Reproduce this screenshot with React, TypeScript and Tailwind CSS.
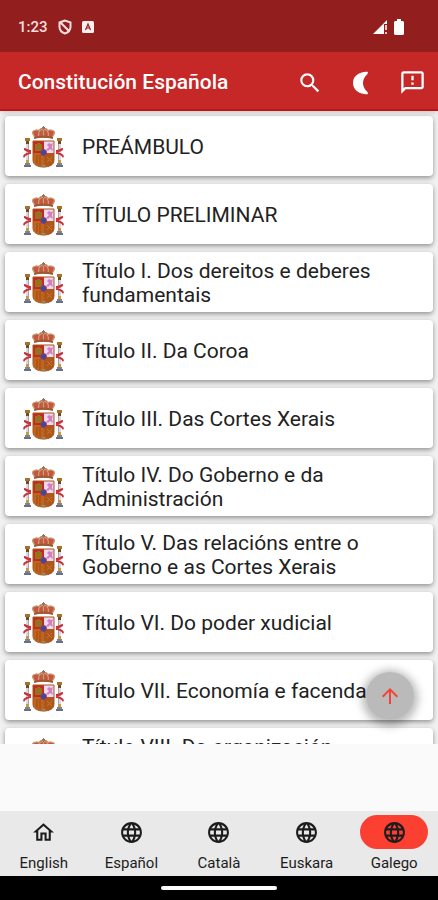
import { MdArrowUpward, MdLanguage, MdOutlineFeedback, MdOutlineHome, MdSearch } from "react-icons/md";

const titles = [
  "PREÁMBULO",
  "TÍTULO PRELIMINAR",
  "Título I. Dos dereitos e deberes fundamentais",
  "Título II. Da Coroa",
  "Título III. Das Cortes Xerais",
  "Título IV. Do Goberno e da Administración",
  "Título V. Das relacións entre o Goberno e as Cortes Xerais",
  "Título VI. Do poder xudicial",
  "Título VII. Economía e facenda",
  "Título VIII. Da organización territorial do Estado",
];

const languages = [
  { label: "English", icon: MdOutlineHome },
  { label: "Español", icon: MdLanguage },
  { label: "Català", icon: MdLanguage },
  { label: "Euskara", icon: MdLanguage },
  { label: "Galego", icon: MdLanguage, active: true },
];

function Pillar() {
  return (
    <>
      <path d="M2 12h5v3H2z" fill="#a87328" />
      <path d="M3 15h3v3H3z" fill="#6b4c2c" />
      <path d="M3 18h3v17H3z" fill="#dcd9dc" />
      <path d="M5 18h1v17H5z" fill="#a9a4ac" />
      <path d="M3 34h3v3H3z" fill="#c79b3c" />
      <path d="M2 37h5v2H2z" fill="#7c8398" />
      <path d="M1 39h7v2H1z" fill="#6a7186" />
      <path d="M1 22c2 0 4 2 7 2v2c-3 1-5-1-7-2z" fill="#c8323a" />
      <path d="M0 30c2-3 5-4 8-4v2c-3 0-5 1-7 4z" fill="#c8323a" />
    </>
  );
}

function CoatOfArms() {
  return (
    <svg viewBox="0 0 42 42" className="h-[42px] w-[42px] shrink-0" aria-hidden="true">
      <Pillar />
      <g transform="translate(41 0) scale(-1 1)">
        <Pillar />
      </g>
      {/* crown */}
      <path d="M12 12 9 7c0-3 4-4 7-3 1-2 3-2 4.500-2s3.500 0 4.500 2c3-1 7 0 7 3l-3 5z" fill="#c9553f" />
      <path
        d="M12 12 9.500 7c0-3 4-3.500 7-2.500M29 12l2.500-5c0-3-4-3.500-7-2.500M16.500 12c-2-4-1-8 4-9 5 1 6 5 4 9M20.500 2v10"
        fill="none"
        stroke="#c2a57c"
        strokeWidth="1.200"
      />
      <path d="M20.500 0v4M19 1.500h3" stroke="#8a7a58" strokeWidth="1" />
      <path d="M11 11q9.500-3 19 0v2q-9.500-3-19 0z" fill="#9b5b32" />
      {/* shield */}
      <path d="M10 15h11v12H10z" fill="#c6281f" />
      <path d="M21 15h10v12H21z" fill="#efd9ee" />
      <path d="M10 27h11v14c-6 0-11-2-11-7z" fill="#bd651c" />
      <path d="M21 27h10v7c0 5-4 7-10 7z" fill="#b0561c" />
      <path d="M12 18h2v-1h3v1h2v7h-7z" fill="#94701f" />
      <path d="m23 24 3-3-2-2 2-2 2 1 2-1-1 4 1 4-3-2-2 2z" fill="#d37fc0" />
      <path d="M14 29v9M17 29v11" stroke="#a34718" strokeWidth="1" />
      <path d="m24 31 5 5M29 31l-5 5" stroke="#c07a2a" strokeWidth="1" />
      <path d="M10 15h21v19c0 5-5 7-10.500 7S10 39 10 34z" fill="none" stroke="#a8551f" strokeWidth="1" />
      <circle cx="20.500" cy="26.500" r="3" fill="#3d4a9c" stroke="#a03a5a" strokeWidth="1" />
      <path d="M18 39h5l-2 3z" fill="#8d8d64" />
    </svg>
  );
}

function StatusBar() {
  return (
    <div className="flex h-13 shrink-0 items-center bg-[#931e1e] px-[18px] pt-0.5 text-white">
      <span className="text-[15px] font-medium text-[#f5dede]">1:23</span>
      <svg viewBox="0 0 14 16" className="ml-2.5 h-4 w-3.5" fill="none" stroke="#f5dede" strokeWidth="2">
        <path d="M7 1.500 1.500 3.500v4.500c0 3 2.500 5.500 5.500 6.500 3-1 5.500-3.500 5.500-6.500V3.500zM3 4l8 8" />
      </svg>
      <svg viewBox="0 0 12 12" className="ml-2.5 h-3 w-3">
        <rect width="12" height="12" rx="1.500" fill="#fbeeee" />
        <path d="M3.500 9 6 3l2.500 6M4.500 7h3" fill="none" stroke="#931e1e" strokeWidth="1.200" />
      </svg>
      <svg viewBox="0 0 15 15" className="ml-auto h-[15px] w-[15px]">
        <path d="M0 14 14 0v4h-3v10z" fill="#fff" />
        <path d="M13 5v5M13 12v2" stroke="#fff" strokeWidth="1.500" />
      </svg>
      <svg viewBox="0 0 10 16" className="mr-4 ml-1.5 h-4 w-2.5" fill="#fff">
        <path d="M3 0h4v2h2l1 1v12l-1 1H1l-1-1V3l1-1h2z" />
      </svg>
    </div>
  );
}

export default function App() {
  return (
    <div className="flex h-screen flex-col bg-[#fafafa] font-[Roboto,sans-serif]">
      <StatusBar />
      <header className="z-10 flex h-[59px] shrink-0 items-center border-b-2 border-[#c01414] bg-[#c62828] pt-1 pr-3 pl-[18px] text-white shadow-md">
        <h1 className="flex-1 text-[21px] font-medium">Constitución Española</h1>
        <div className="flex items-center gap-[26px]">
          <button aria-label="Buscar">
            <MdSearch className="h-[26px] w-[26px]" />
          </button>
          <button aria-label="Modo escuro">
            <svg viewBox="0 0 24 24" className="h-6 w-6" fill="currentColor">
              <path d="M19 1C14 0 4 3 4 12s10 12 15 11l-.5-2c-6-5-6-13 0-18z" />
            </svg>
          </button>
          <button aria-label="Comentarios">
            <MdOutlineFeedback className="h-[27px] w-[27px]" />
          </button>
        </div>
      </header>

      <div className="relative min-h-0 flex-1">
        <main className="h-full overflow-hidden bg-[#f1f1f1] px-[5px] pt-[5px]">
          <ul className="flex flex-col gap-2">
            {titles.map((title) => (
              <li key={title}>
                <button className="flex h-15 w-full items-center gap-[17px] rounded-sm bg-white pt-0.5 pr-10 pl-[18px] text-left shadow-[0_2px_5px_rgba(0,0,0,0.4)]">
                  <CoatOfArms />
                  <span className="text-[21px] leading-6 text-[#222]">{title}</span>
                </button>
              </li>
            ))}
          </ul>
        </main>
        <button
          aria-label="Subir"
          className="absolute right-6 bottom-6 flex h-12 w-12 items-center justify-center rounded-full bg-black/27 text-[#f44336] shadow-[0_2px_8px_4px_rgba(0,0,0,0.27)]"
        >
          <MdArrowUpward className="h-6 w-6" />
        </button>
      </div>

      <nav className="mt-[67px] flex h-[65px] shrink-0 justify-between bg-[#e9e9e9]">
        {languages.map(({ label, icon: Icon, active }) => (
          <button key={label} className="flex flex-1 flex-col items-center pt-1 text-[#1c1c1c]">
            <span className={`flex h-[34px] w-17 items-center justify-center rounded-full ${active ? "bg-[#fb4031]" : ""}`}>
              <Icon className="h-[25px] w-[25px]" />
            </span>
            <span className="mt-1 text-[15px] leading-5">{label}</span>
          </button>
        ))}
      </nav>
      <div className="flex h-6 shrink-0 items-center justify-center bg-black">
        <div className="h-1 w-29 rounded-full bg-white" />
      </div>
    </div>
  );
}
